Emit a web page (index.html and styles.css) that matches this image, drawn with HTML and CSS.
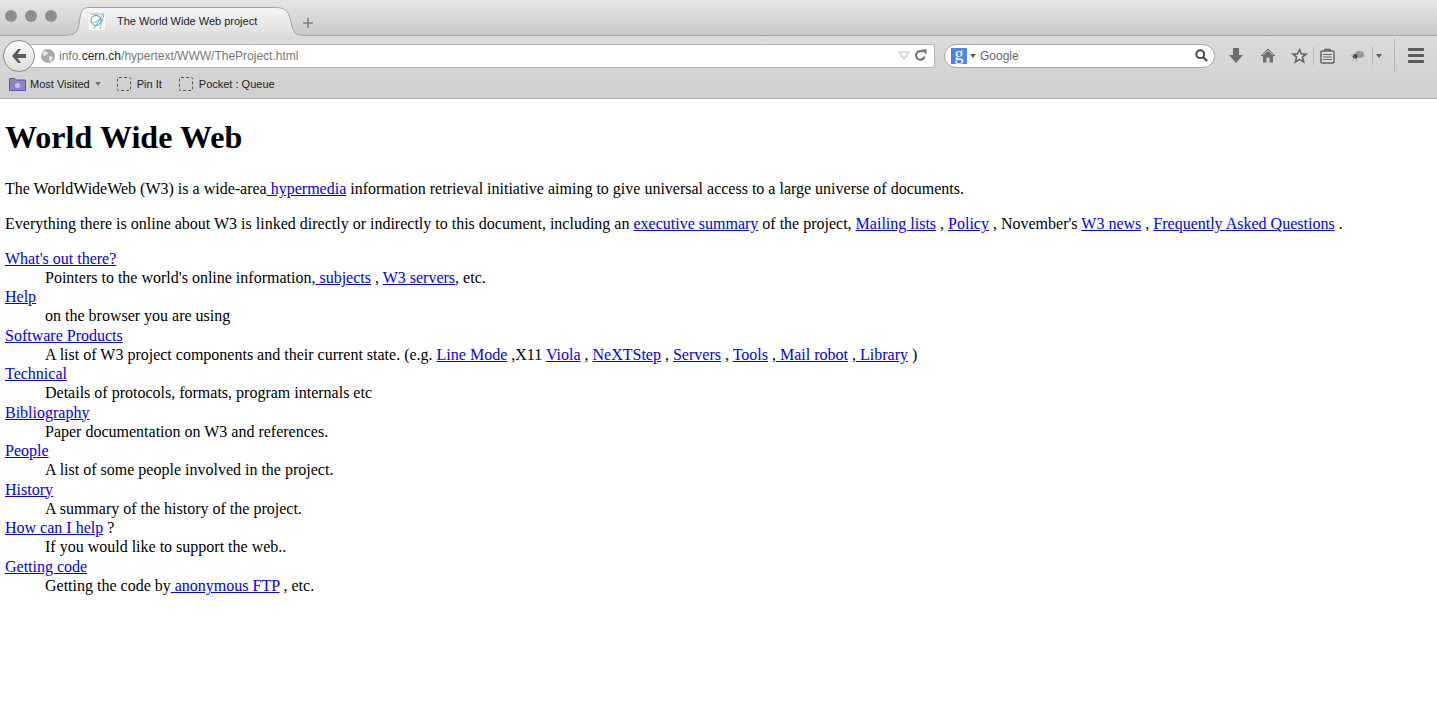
FILE: index.html
```html
<!DOCTYPE html>
<html lang="en">
<head>
<meta charset="utf-8">
<title>The World Wide Web project</title>
<link rel="stylesheet" href="styles.css">
</head>
<body>
<header class="chrome">
  <div class="tabbar">
    <div class="lights"><i></i><i></i><i></i></div>
    <div class="tab">
      <svg class="tab-shape" width="235" height="29" viewBox="0 0 235 29"><defs><linearGradient id="tabfill" x1="0" y1="0" x2="0" y2="1"><stop offset="0" stop-color="#f6f6f6"/><stop offset="1" stop-color="#dedede"/></linearGradient></defs><path d="M0 28C7 28 10 26 11.500 20L13.500 8C14.500 3 16.500 .5 22 .5H208C216 .5 220 3 222 8L225 19C227 26 229 28 235 28V29H0Z" fill="url(#tabfill)"/><path d="M0 28C7 28 10 26 11.500 20L13.500 8C14.500 3 16.500 .5 22 .5H208C216 .5 220 3 222 8L225 19C227 26 229 28 235 28" fill="none" stroke="#a4a4a4"/></svg>
      <svg class="favicon" width="16" height="17" viewBox="0 0 16 17"><rect width="16" height="17" fill="#fff"/><circle cx="7" cy="7.500" r="5" fill="none" stroke="#4c8fb5"/><path d="M1 1H15L11 16M13 2L5 16M4 10L13 6" fill="none" stroke="#5f9dc0" stroke-width=".8"/></svg>
      <span class="tab-title">The World Wide Web project</span>
    </div>
    <svg class="newtab" width="12" height="12" viewBox="0 0 12 12"><path d="M6 1V11M1 6H11" stroke="#808080" stroke-width="1.600"/></svg>
  </div>
  <div class="navbar">
    <div class="urlwrap">
      <div class="back"><svg width="20" height="18" viewBox="0 0 20 18"><path d="M9 2L3 9L9 16H12L8.500 11H17V7H8.500L12 2Z" fill="#5c5c5c"/></svg></div>
      <div class="url">
        <svg class="globe" width="14" height="14" viewBox="0 0 14 14"><circle cx="7" cy="7" r="7" fill="#a9a9a9"/><path d="M3 2L7 3L6 6L3 7L1 5ZM8 7L12 8L10 13L8 11Z" fill="#e4e4e4"/></svg>
        <span class="addr">info.<b>cern.ch</b>/hypertext/WWW/TheProject.html</span>
        <svg class="dropmark" width="12" height="9" viewBox="0 0 12 9"><path d="M1 1H11L6 8Z" fill="none" stroke="#c4c4c4" stroke-width="1.200"/></svg>
        <svg class="reload" width="13" height="13" viewBox="0 0 13 13"><path d="M10.500 7.500A4.300 4.300 0 1 1 9 3" fill="none" stroke="#6b6b6b" stroke-width="2"/><path d="M7.500 0.500H12.500V5.500Z" fill="#6b6b6b"/></svg>
      </div>
    </div>
    <div class="search">
      <span class="g-badge">g</span>
      <i class="caret"></i>
      <span class="search-text">Google</span>
      <svg class="mag" width="13" height="13" viewBox="0 0 13 13"><circle cx="5.200" cy="5.200" r="3.900" fill="none" stroke="#4a4a4a" stroke-width="2"/><path d="M8 8L12 12" stroke="#4a4a4a" stroke-width="2.400"/></svg>
    </div>
    <div class="tools">
      <svg class="t-down" width="16" height="17" viewBox="0 0 16 17"><path d="M5 1H11V8H15L8 16L1 8H5Z" fill="#6e6e6e"/></svg>
      <svg class="t-home" width="16" height="15" viewBox="0 0 16 15"><path d="M8 .5L15.500 8H13V14.500H9.500V9.500H6.500V14.500H3V8H.5Z" fill="#6e6e6e"/><path d="M3 7L8 2.500L13 7" fill="none" stroke="#ddd" stroke-width=".8"/></svg>
      <svg class="t-star" width="17" height="16" viewBox="0 0 17 16"><path d="M8.500 1.800L10.400 6H15L11.400 9.100L12.600 14L8.500 11.400L4.400 14L5.600 9.100L2 6H6.600Z" fill="#e6e6e6" stroke="#666" stroke-width="1.700"/></svg>
      <i class="sep t-sep1"></i>
      <svg class="t-clip" width="15" height="16" viewBox="0 0 15 16"><rect x="1" y="3" width="13" height="12" rx="1" fill="#ddd" stroke="#666" stroke-width="1.500"/><path d="M5 3.500V1.500H10V3.500" fill="none" stroke="#666" stroke-width="1.500"/><path d="M3 6.500H12M3 9H12M3 11.500H12" stroke="#666"/></svg>
      <svg class="t-bug" width="16" height="14" viewBox="0 0 16 14"><ellipse cx="10.500" cy="5.500" rx="4.500" ry="3.500" fill="#999"/><circle cx="6" cy="7.500" r="2.400" fill="#444"/><path d="M1 6L5 7M3 12L6 8M7 13L8 9M11 2L12 5" stroke="#aaa"/></svg>
      <i class="sep t-sep2"></i>
      <i class="caret t-caret"></i>
      <i class="sep t-sep3"></i>
      <div class="hamburger"><i></i><i></i><i></i></div>
    </div>
  </div>
  <nav class="bookmarks">
    <span class="bm bm-most"><svg width="17" height="14" viewBox="0 0 17 14"><path d="M.5 13.500V1.500H6L7.500 3H16.500V13.500Z" fill="#8f84c9" stroke="#5f55a0"/><circle cx="8.500" cy="8.500" r="2.500" fill="#c9c3ea"/></svg>Most Visited<i class="caret bm-caret"></i></span>
    <span class="bm bm-pin"><i class="dash"></i>Pin It</span>
    <span class="bm bm-pocket"><i class="dash"></i>Pocket : Queue</span>
  </nav>
</header>
<main class="page">
  <h1>World Wide Web</h1>
  <p>The WorldWideWeb (W3) is a wide-area<a href="#"> hypermedia</a> information retrieval initiative aiming to give universal access to a large universe of documents.</p>
  <p>Everything there is online about W3 is linked directly or indirectly to this document, including an <a href="#">executive summary</a> of the project, <a href="#">Mailing lists</a> , <a href="#">Policy</a> , November's <a href="#">W3 news</a> , <a href="#">Frequently Asked Questions</a> .</p>
  <dl>
    <dt><a href="#">What's out there?</a></dt>
    <dd>Pointers to the world's online information,<a href="#"> subjects</a> , <a href="#">W3 servers</a>, etc.</dd>
    <dt><a href="#">Help</a></dt>
    <dd>on the browser you are using</dd>
    <dt><a href="#">Software Products</a></dt>
    <dd>A list of W3 project components and their current state. (e.g. <a href="#">Line Mode</a> ,X11 <a href="#">Viola</a> , <a href="#">NeXTStep</a> , <a href="#">Servers</a> , <a href="#">Tools</a> ,<a href="#"> Mail robot</a> ,<a href="#"> Library</a> )</dd>
    <dt><a href="#">Technical</a></dt>
    <dd>Details of protocols, formats, program internals etc</dd>
    <dt><a href="#">Bibliography</a></dt>
    <dd>Paper documentation on W3 and references.</dd>
    <dt><a href="#">People</a></dt>
    <dd>A list of some people involved in the project.</dd>
    <dt><a href="#">History</a></dt>
    <dd>A summary of the history of the project.</dd>
    <dt><a href="#">How can I help</a> ?</dt>
    <dd>If you would like to support the web..</dd>
    <dt><a href="#">Getting code</a></dt>
    <dd>Getting the code by<a href="#"> anonymous FTP</a> , etc.</dd>
  </dl>
</main>
</body>
</html>
```
FILE: styles.css
```css
* { box-sizing: border-box; }
html, body { margin: 0; padding: 0; background: #fff; }
body { font-family: "Liberation Serif", "Times New Roman", serif; font-size: 16px; color: #000; overflow: hidden; }
i { display: block; }

.chrome { height: 99px; display: flex; flex-direction: column; font-family: "Liberation Sans", Arial, sans-serif; background: linear-gradient(#e2e2e2, #cfcfcf); border-bottom: 1px solid #a9a9a9; }

.tabbar { height: 36px; display: flex; align-items: flex-end; background: linear-gradient(#e6e6e6, #c9c9c9); flex: none; border-bottom: 1px solid #a8a8a8; position: relative; }
.lights { display: flex; gap: 8px; position: absolute; left: 5px; top: 10px; }
.lights i { width: 12px; height: 12px; border-radius: 50%; background: #8e8e8e; }
.tab { position: relative; width: 235px; height: 29px; margin: 0 0 -1px 67px; display: flex; align-items: center; }
.tab-shape { position: absolute; left: 0; top: 0; }
.favicon { position: relative; margin: 0 0 1px 22px; }
.tab-title { position: relative; font-size: 11px; color: #222; margin: 0 0 1px 12px; white-space: nowrap; }
.newtab { margin: 0 0 6px 0; }

.navbar { height: 39px; display: flex; align-items: center; padding: 0 0 0 3px; flex: none; position: relative; }
.urlwrap { display: flex; align-items: center; width: 932px; position: relative; }
.back { width: 32px; height: 32px; border-radius: 50%; border: 1px solid #8a8a8a; background: linear-gradient(#fbfbfb, #dcdcdc); display: flex; align-items: center; justify-content: center; position: relative; z-index: 1; flex: none; }
.url { flex: 1; height: 24px; margin-left: -4px; background: #fff; border: 1px solid #b5b5b5; border-left: 0; border-radius: 0 3px 3px 0; display: flex; align-items: center; padding-left: 10px; }
.globe { flex: none; }
.addr { font-size: 12px; color: #777; margin-left: 4px; flex: 1; white-space: nowrap; }
.addr b { color: #222; font-weight: 400; }
.dropmark { margin-right: 4px; }
.reload { margin-right: 7px; }

.search { width: 271px; height: 24px; margin-left: 9px; background: #fff; border: 1px solid #a8a8a8; border-radius: 12px; display: flex; align-items: center; padding: 0 6px 0 6px; }
.g-badge { width: 16px; height: 16px; background: #4a86e8; color: #fff; font: 400 18px/13px "Liberation Serif", serif; text-align: center; }
.caret { width: 0; height: 0; border: 3.5px solid transparent; border-top: 4px solid #5c5c5c; border-bottom: 0; }
.search .caret { margin-left: 3px; }
.search-text { font-size: 12px; color: #666; margin-left: 4px; flex: 1; }

.tools { flex: 1; height: 100%; display: flex; align-items: center; position: relative; }
.t-down { margin-left: 13px; }
.t-home { margin-left: 16px; }
.t-star { margin-left: 15px; }
.sep { width: 1px; background: #b4b4b4; }
.t-sep1 { height: 18px; margin-left: 5px; }
.t-clip { margin-left: 6px; }
.t-bug { margin-left: 14px; }
.t-sep2 { height: 18px; margin-left: 7px; }
.t-caret { margin-left: 3px; }
.t-sep3 { height: 34px; margin-left: 12px; }
.hamburger { margin-left: 13px; display: flex; flex-direction: column; gap: 3px; }
.hamburger i { width: 16px; height: 3px; background: #5c5c5c; border-radius: 1px; }

.bookmarks { flex: 1; display: flex; align-items: center; font-size: 11px; color: #222; padding: 0 0 5px 9px; }
.bm { display: flex; align-items: center; white-space: nowrap; }
.bm svg { margin-right: 4px; }
.bm-caret { margin-left: 5px; border-top-color: #777; }
.bm-pin { margin-left: 16px; }
.bm-pocket { margin-left: 17px; }
.dash { width: 14px; height: 14px; border: 1px dashed #555; border-radius: 2px; margin-right: 6px; }

.page { padding: 0 5px; line-height: 19.25px; }
h1 { font-size: 32px; line-height: 37px; margin: 20px 0 0; letter-spacing: .06px; }
p { margin: 23px 0 0; }
p + p { margin-top: 16px; }
dl { margin: 15px 0 0; }
dd { margin: 0 0 0 40px; }
a { color: #0000ee; text-decoration: underline; }
```
